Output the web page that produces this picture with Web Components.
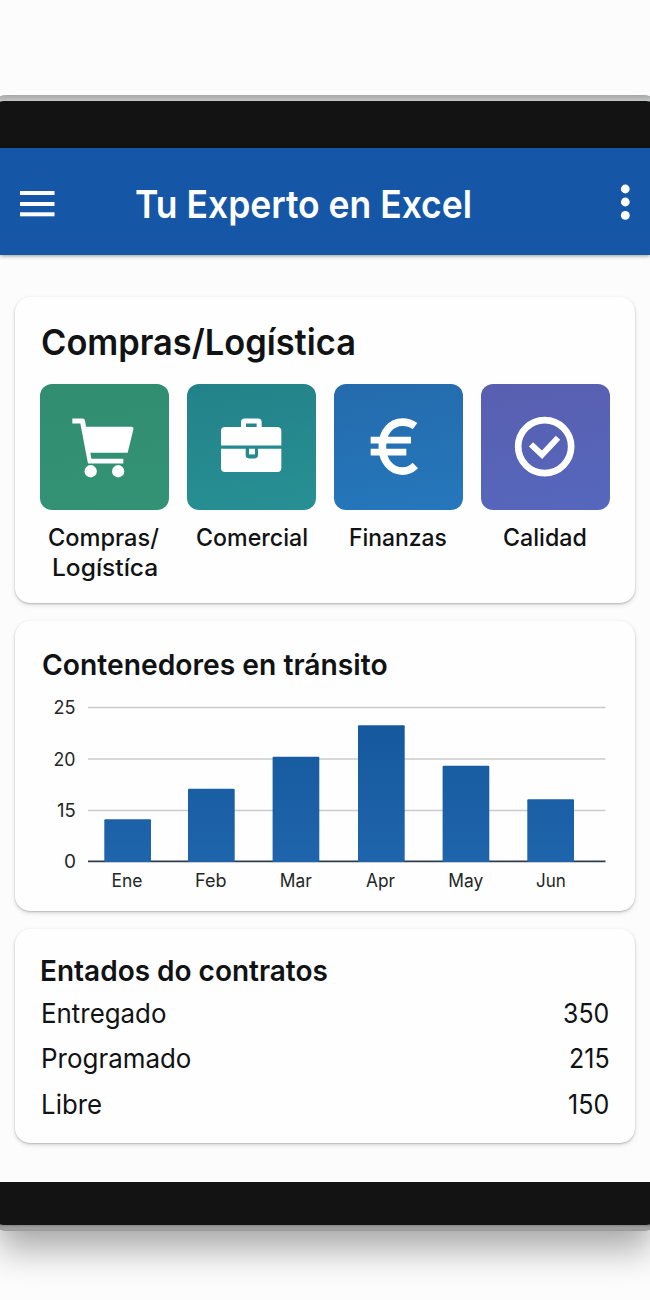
<!DOCTYPE html>
<html lang="es">
<head>
<meta charset="utf-8">
<title>Tu Experto en Excel</title>
<style>
	html, body {
		margin: 0;
		height: 1300px;
		overflow: hidden;
		background: #fcfcfc;
		font-family: Inter, "Liberation Sans", sans-serif;
		color: #111214;
	}
</style>
</head>
<body>
<tablet-frame>
	<app-bar><fit-text width="334">Tu Experto en Excel</fit-text></app-bar>
	<main-cards>
		<info-card style="height: 305.5px; --pad: 24px; --head: 35.6px; --line: 44px">
			<fit-text slot="heading" width="312.5" style="margin-left: .5px">Compras/Logística</fit-text>
			<tile-row>
				<app-tile icon="cart" style="--from: #328d70; --to: #339275">
					<fit-text width="110">Compras/</fit-text>
					<fit-text width="103.5" style="font-weight: 450">Logístíca</fit-text>
				</app-tile>
				<app-tile icon="briefcase" style="--from: #238289; --to: #279094">
					<fit-text width="110" style="margin-left: 1.5px">Comercial</fit-text>
				</app-tile>
				<app-tile icon="euro" style="--from: #246bac; --to: #2577bc">
					<fit-text width="96">Finanzas</fit-text>
				</app-tile>
				<app-tile icon="check" style="--from: #595fb0; --to: #5567bd">
					<fit-text width="82">Calidad</fit-text>
				</app-tile>
			</tile-row>
		</info-card>
		<info-card style="height: 290.5px; --pad: 26.5px; --head: 29px; --line: 36px">
			<fit-text slot="heading" width="344" style="margin-left: 1.5px">Contenedores en tránsito</fit-text>
			<bar-chart></bar-chart>
		</info-card>
		<info-card style="height: 214px; --pad: 23.6px; --head: 28.8px; --line: 36px">
			<fit-text slot="heading" width="285" style="margin-left: 1.3px">Entados do contratos</fit-text>
			<status-row><fit-text width="122.5">Entregado</fit-text><fit-text slot="value" width="44.5">350</fit-text></status-row>
			<status-row><fit-text width="147.5">Programado</fit-text><fit-text slot="value" width="38.5">215</fit-text></status-row>
			<status-row><fit-text width="58.5">Libre</fit-text><fit-text slot="value" width="39.5">150</fit-text></status-row>
		</info-card>
	</main-cards>
</tablet-frame>

<script>
(function() {
	function makeTemplate(html) {
		const template = document.createElement("template");
		template.innerHTML = html;
		return template;
	}

	class BaseElement extends HTMLElement {
		constructor() {
			super();
			this._shadowRoot = this.attachShadow({mode: "open"});
			this._shadowRoot.appendChild(this.constructor.template.content.cloneNode(true));
		}
	}

	class TabletFrame extends BaseElement {}
	TabletFrame.template = makeTemplate(`
		<style>
		:host {
			display: block;
			padding-top: 95px;
		}
		.rim {
			margin: 0 -9px;
			padding: 6px 2px;
			border-radius: 15px;
			background: linear-gradient(#a9a9a9 0, #b9b9b9 4px, #c6c8c9 6px, #888 12px, #888 1124px, #858585 1130px, #a2a2a2 1133px, #999 1136px);
			box-shadow: 0 28px 34px -8px rgba(0,0,0,.3), 0 8px 20px -6px rgba(0,0,0,.06);
		}
		.bezel {
			box-sizing: border-box;
			height: 1124px;
			padding: 47px 7px 43px;
			border-radius: 11px;
			background: #131313;
		}
		.screen {
			height: 1034px;
			background: #fcfcfc;
		}
		</style>
		<div class="rim"><div class="bezel"><div class="screen"><slot></slot></div></div></div>
	`);

	class AppBar extends BaseElement {}
	AppBar.template = makeTemplate(`
		<style>
		:host {
			box-sizing: border-box;
			display: flex;
			align-items: center;
			height: 107px;
			padding: 0 20px;
			background: #1557a6;
			box-shadow: 0 1px 4px rgba(0,0,0,.4);
			color: #fff;
		}
		.title {
			flex: 1;
			padding: 4px 0 0 81px;
			font-size: 38.8px;
			font-weight: 600;
			line-height: 46px;
		}
		.menu { margin-top: 5px; }
		.more { margin-right: -1px; }
		</style>
		<svg class="menu" width="35" height="28" fill="currentColor">
			<rect x="0" y="1" width="34.5" height="4"/><rect x="0" y="12" width="34.5" height="4"/><rect x="0" y="22.3" width="34.5" height="4"/>
		</svg>
		<div class="title"><slot></slot></div>
		<svg class="more" width="11" height="38" fill="currentColor">
			<circle cx="5.3" cy="6" r="4.4"/><circle cx="5.3" cy="19" r="4.4"/><circle cx="5.3" cy="32.4" r="4.4"/>
		</svg>
	`);

	class MainCards extends BaseElement {}
	MainCards.template = makeTemplate(`
		<style>
		:host {
			display: flex;
			flex-direction: column;
			gap: 18px;
			padding: 42px 15px 0;
		}
		</style>
		<slot></slot>
	`);

	class InfoCard extends BaseElement {}
	InfoCard.template = makeTemplate(`
		<style>
		:host {
			box-sizing: border-box;
			display: block;
			padding: var(--pad) 26px 0;
			border-radius: 15px;
			background: #fefefe;
			box-shadow: 0 1px 2px rgba(0,0,0,.2), 0 2px 5px rgba(0,0,0,.12);
		}
		.heading {
			height: var(--line);
			font-size: var(--head);
			font-weight: 600;
			line-height: var(--line);
		}
		</style>
		<div class="heading"><slot name="heading"></slot></div>
		<slot></slot>
	`);

	class TileRow extends BaseElement {}
	TileRow.template = makeTemplate(`
		<style>
		:host {
			display: grid;
			grid-template-columns: repeat(4, 129px);
			justify-content: space-between;
			margin: 19.2px -1px 0 -.6px;
		}
		</style>
		<slot></slot>
	`);

	const icons = {
		cart: `<svg viewBox="17 14 387 376" fill="#fff">
			<path d="M114 117h31q6 0 7 6l3 19h136q8 0 6 8l-17 70H168l3 18h96v14H161L138 132h-24z"/>
			<circle cx="169" cy="275.5" r="18.5"/><circle cx="251.5" cy="275.5" r="18.5"/></svg>`,
		briefcase: `<svg viewBox="22 14 387 376" fill="#fff">
			<path fill-rule="evenodd" d="M184 144v-16q0-11 11-11h40q11 0 11 11v16zM199 144h32v-12h-32z"/>
			<path d="M124 198v-43q0-12 12-12h157q12 0 12 12v43z"/>
			<path d="M124 208h74v19q0 10 10 10h17q10 0 10-10v-19h70v58q0 12-12 12H136q-12 0-12-12z"/>
			<path d="M208 208h18v17h-18z"/></svg>`,
		euro: `<svg viewBox="27 298 387 376" fill="none" stroke="#fff">
			<path stroke-width="23" d="M270 424C258 415 246 412 233 412C197 412 172 443 172 485C172 528 197 559 233 559C247 559 259 554 271 542"/>
			<path stroke-width="20" d="M137 466h121M137 502h107"/></svg>`,
		check: `<svg viewBox="467 298 387 376" fill="none" stroke="#fff">
			<circle cx="658" cy="485.5" r="79.5" stroke-width="20"/>
			<path stroke-width="18" d="M617 479L650 510L698 459"/></svg>`
	};

	class AppTile extends BaseElement {
		connectedCallback() {
			this._shadowRoot.querySelector(".tile").innerHTML = icons[this.getAttribute("icon")];
		}
	}
	AppTile.template = makeTemplate(`
		<style>
		:host { display: block; }
		.tile {
			height: 125.5px;
			border-radius: 12px;
			background: linear-gradient(170deg, var(--from), var(--to));
		}
		.tile svg {
			display: block;
			width: 100%;
			height: 100%;
		}
		.label {
			display: flex;
			flex-direction: column;
			align-items: center;
			margin: 13.3px 0 0 -1px;
			font-size: 24px;
			font-weight: 500;
			line-height: 30px;
		}
		</style>
		<div class="tile"></div>
		<div class="label"><slot></slot></div>
	`);

	class StatusRow extends BaseElement {}
	StatusRow.template = makeTemplate(`
		<style>
		:host {
			display: flex;
			justify-content: space-between;
			height: 45.5px;
			padding: 0 .5px 0 1.5px;
			font-size: 26.6px;
			line-height: 45.5px;
		}
		:host(:nth-of-type(1)) { margin-top: 2.4px; }
		</style>
		<slot></slot><slot name="value"></slot>
	`);

	// Stretches one line of text so that its ink fills the given width
	class FitText extends BaseElement {
		connectedCallback() {
			const width = parseFloat(this.getAttribute("width"));
			const style = getComputedStyle(this);
			const ctx = document.createElement("canvas").getContext("2d");
			ctx.font = style.fontWeight + " " + style.fontSize + " " + style.fontFamily;
			const m = ctx.measureText(this.textContent);
			const scale = width / (m.actualBoundingBoxLeft + m.actualBoundingBoxRight);
			this.style.width = width + "px";
			this._shadowRoot.querySelector("span").style.transform =
				"translateX(" + m.actualBoundingBoxLeft * scale + "px) scaleX(" + scale + ")";
		}
	}
	FitText.template = makeTemplate(`
		<style>
		:host {
			display: block;
			white-space: nowrap;
		}
		span {
			display: inline-block;
			transform-origin: 0 0;
		}
		</style>
		<span><slot></slot></span>
	`);

	// x, top of the bar, month, left edge and width of the label
	const bars = [
		[104.3, 819.3, "Ene", 111.5, 31],
		[188, 788.8, "Feb", 195, 31.5],
		[272.6, 756.8, "Mar", 279.7, 32],
		[358, 725.3, "Apr", 366, 29],
		[442.6, 765.8, "May", 448.3, 35],
		[527.3, 799.2, "Jun", 536, 29.8]
	];
	const ticks = [[25, 707.5, 53.5, 22], [20, 759, 53.5, 22], [15, 810.5, 57, 18.7], [0, 861.3, 64, 12]];

	class BarChart extends BaseElement {
		connectedCallback() {
			let svg = "";
			ticks.forEach(([value, y, x, w]) => {
				if (value) {
					svg += `<path class="grid" d="M88 ${y}H605.5"/>`;
				}
				svg += `<text class="tick" x="${x}" y="${y + 6.5}" textLength="${w}" lengthAdjust="spacingAndGlyphs">${value}</text>`;
			});
			svg += `<path class="axis" d="M88 861.3H605.5"/>`;
			bars.forEach(([x, top, month, lx, lw]) => {
				svg += `<rect x="${x}" y="${top}" width="46.7" height="${862 - top}" rx="1" fill="url(#blue)"/>`;
				svg += `<text x="${lx}" y="887" textLength="${lw}" lengthAdjust="spacingAndGlyphs">${month}</text>`;
			});
			this._shadowRoot.querySelector("g").innerHTML = svg;
		}
	}
	BarChart.template = makeTemplate(`
		<style>
		:host { display: block; }
		svg { display: block; }
		text {
			font-size: 18px;
			fill: #242628;
		}
		.tick { font-size: 18.8px; }
		.grid { stroke: #c9cbcd; stroke-width: 1.3; }
		.axis { stroke: #2d3d4d; stroke-width: 1.7; }
		</style>
		<svg width="568" height="215" viewBox="41 683 568 215">
			<defs>
				<linearGradient id="blue" gradientUnits="userSpaceOnUse" x1="0" y1="725" x2="0" y2="862">
					<stop offset="0" stop-color="#15589e"/><stop offset="1" stop-color="#1f65ab"/>
				</linearGradient>
			</defs>
			<g></g>
		</svg>
	`);

	// containers first, so that fit-text sees the final font of its slot
	customElements.define("tablet-frame", TabletFrame);
	customElements.define("app-bar", AppBar);
	customElements.define("main-cards", MainCards);
	customElements.define("info-card", InfoCard);
	customElements.define("tile-row", TileRow);
	customElements.define("app-tile", AppTile);
	customElements.define("status-row", StatusRow);
	customElements.define("bar-chart", BarChart);
	customElements.define("fit-text", FitText);
})();
</script>
</body>
</html>
